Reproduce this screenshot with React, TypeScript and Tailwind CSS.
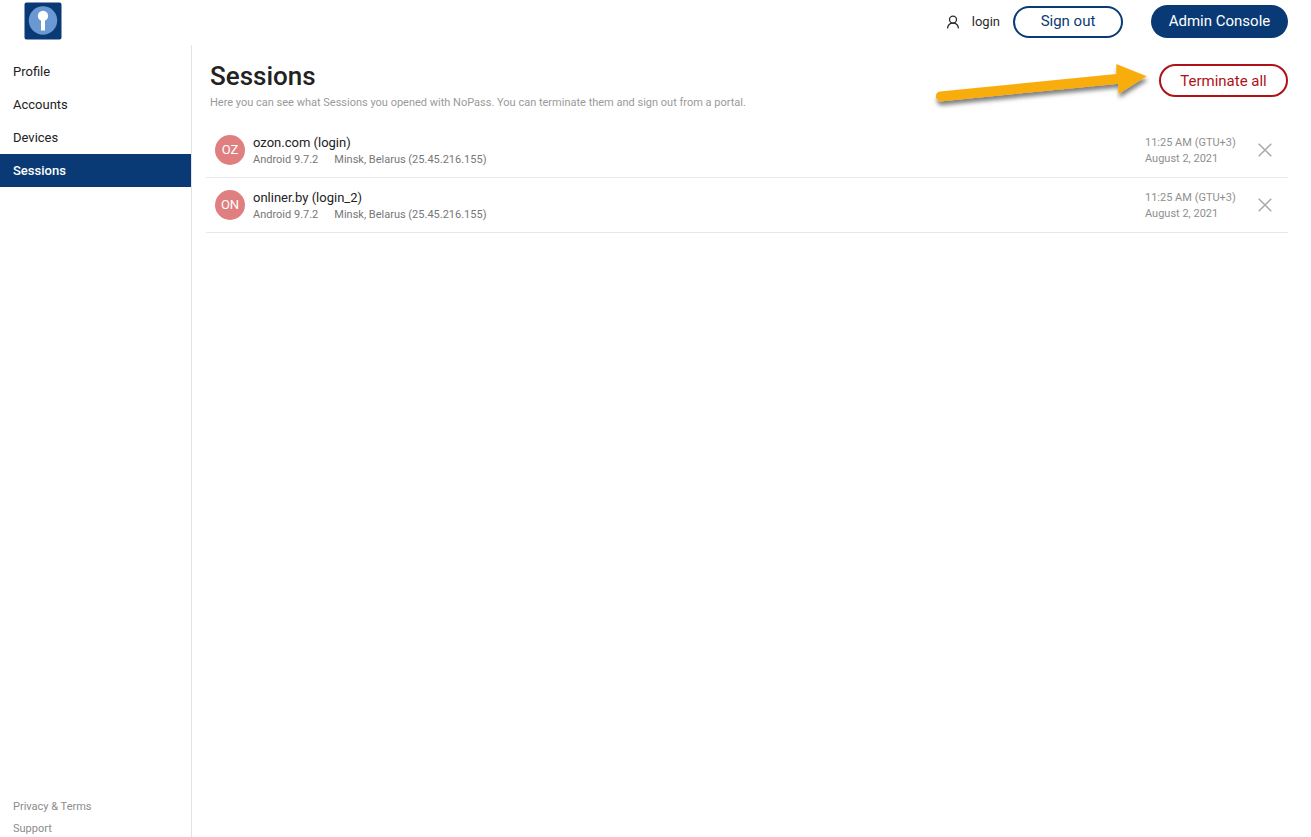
interface Session {
  initials: string;
  name: string;
  device: string;
  location: string;
  time: string;
  date: string;
}

const sessions: Session[] = [
  {
    initials: "OZ",
    name: "ozon.com (login)",
    device: "Android 9.7.2",
    location: "Minsk, Belarus (25.45.216.155)",
    time: "11:25 AM (GTU+3)",
    date: "August 2, 2021",
  },
  {
    initials: "ON",
    name: "onliner.by (login_2)",
    device: "Android 9.7.2",
    location: "Minsk, Belarus (25.45.216.155)",
    time: "11:25 AM (GTU+3)",
    date: "August 2, 2021",
  },
];

const navItems = ["Profile", "Accounts", "Devices", "Sessions"];

const Logo = () => (
  <svg width="38" height="38" viewBox="0 0 38 38" aria-hidden="true">
    <rect x="0.5" y="0.5" width="37" height="37" rx="2" fill="#0a3a75" />
    <circle cx="19" cy="18.5" r="14.2" fill="#6a98d3" />
    <circle cx="19" cy="13.9" r="5.2" fill="#fff" />
    <rect x="17" y="16" width="4" height="12.5" fill="#fff" />
  </svg>
);

const UserIcon = () => (
  <svg
    width="14"
    height="14"
    viewBox="0 0 14 14"
    fill="none"
    stroke="#2b2b2b"
    strokeWidth="1.3"
    aria-hidden="true"
  >
    <circle cx="7" cy="4.6" r="3.5" />
    <path d="M1.5 13.4C1.8 10.4 3.8 8.1 7 8.1s5.2 2.3 5.5 5.3" />
  </svg>
);

const Arrow = () => (
  <svg
    className="pointer-events-none absolute right-full -top-2.5"
    width="230"
    height="60"
    viewBox="0 0 230 60"
    aria-hidden="true"
  >
    <defs>
      <filter id="arrow-shadow" x="-10%" y="-20%" width="120%" height="160%">
        <feDropShadow dx="1" dy="4" stdDeviation="2" floodColor="#000" floodOpacity="0.5" />
      </filter>
    </defs>
    <path
      d="M11 37.5L187.3 20V10L217.7 22.3L189.3 40V29.7L12.5 47.2C5.5 47.6 5.2 38 11 37.5Z"
      fill="#f9ad0b"
      filter="url(#arrow-shadow)"
    />
  </svg>
);

const Header = () => {
  return (
    <header className="flex h-[45px] items-start justify-between pl-6 pr-[23px]">
      <a href="#" aria-label="NoPass" className="pt-0.5">
        <Logo />
      </a>
      <div className="flex items-center pt-[5px]">
        <UserIcon />
        <span className="ml-3 text-[13px] text-[#2b2b2b]">login</span>
        <button
          type="button"
          className="ml-[13px] h-8 w-[110px] rounded-full border-2 border-[#0a3a75] text-[15px] text-[#0a3a75]"
        >
          Sign out
        </button>
        <button
          type="button"
          className="ml-7 h-[33px] w-[137px] rounded-full bg-[#0a3a75] text-[15px] text-white"
        >
          Admin Console
        </button>
      </div>
    </header>
  );
};

const Sidebar = () => {
  return (
    <aside className="flex w-48 shrink-0 flex-col justify-between border-r border-[#e3e3e3] pt-2.5">
      <nav>
        {navItems.map((item) => (
          <a
            key={item}
            href="#"
            className={
              item === "Sessions"
                ? "flex h-[33px] items-center bg-[#0a3a75] pl-[13px] text-[13px] font-medium text-white"
                : "flex h-[33px] items-center pl-[13px] text-[13px] text-[#222]"
            }
          >
            {item}
          </a>
        ))}
      </nav>
      <div className="flex flex-col gap-1.5 pl-[13px] text-[11px] leading-4 text-[#8c8c8c]">
        <a href="#">Privacy &amp; Terms</a>
        <a href="#">Support</a>
      </div>
    </aside>
  );
};

const SessionRow = ({ session }: { session: Session }) => {
  return (
    <li className="flex h-[55px] items-center border-b border-[#e8e8e8] pl-[9px] pr-[15px]">
      <div className="flex size-[30px] items-center justify-center rounded-full bg-[#e07f80] text-[13px] text-white">
        {session.initials}
      </div>
      <div className="ml-2 flex-1 pt-0.5">
        <p className="text-[13px] leading-[18px] text-[#222]">{session.name}</p>
        <p className="flex gap-4 text-[11px] leading-4 text-[#777]">
          <span>{session.device}</span>
          <span>{session.location}</span>
        </p>
      </div>
      <div className="w-28 pt-0.5 text-[11px] leading-4 text-[#8f8f8f]">
        <p>{session.time}</p>
        <p>{session.date}</p>
      </div>
      <button type="button" aria-label={`Terminate ${session.name}`}>
        <svg width="16" height="16" viewBox="0 0 16 16" stroke="#a9a9a9" strokeWidth="1.5">
          <path d="M1.7 1.7L14.3 14.3M14.3 1.7L1.7 14.3" />
        </svg>
      </button>
    </li>
  );
};

export default function App() {
  return (
    <div className="flex min-h-screen flex-col bg-white font-['Roboto',sans-serif]">
      <Header />
      <div className="flex flex-1">
        <Sidebar />
        <main className="min-w-0 flex-1 pl-3.5 pr-[23px] pt-[15px]">
          <div className="flex items-start justify-between pl-1 pt-1">
            <div>
              <h1 className="text-[26px] font-medium leading-6 text-[#222]">Sessions</h1>
              <p className="mt-[7px] text-[11px] leading-4 text-[#9a9a9a]">
                Here you can see what Sessions you opened with NoPass. You can terminate them and
                sign out from a portal.
              </p>
            </div>
            <div className="relative">
              <button
                type="button"
                className="block h-[33px] w-[129px] rounded-full border-2 border-[#b01116] pt-px text-[15px] text-[#b01116]"
              >
                Terminate all
              </button>
              <Arrow />
            </div>
          </div>
          <ul className="mt-3">
            {sessions.map((session) => (
              <SessionRow key={session.name} session={session} />
            ))}
          </ul>
        </main>
      </div>
    </div>
  );
}
